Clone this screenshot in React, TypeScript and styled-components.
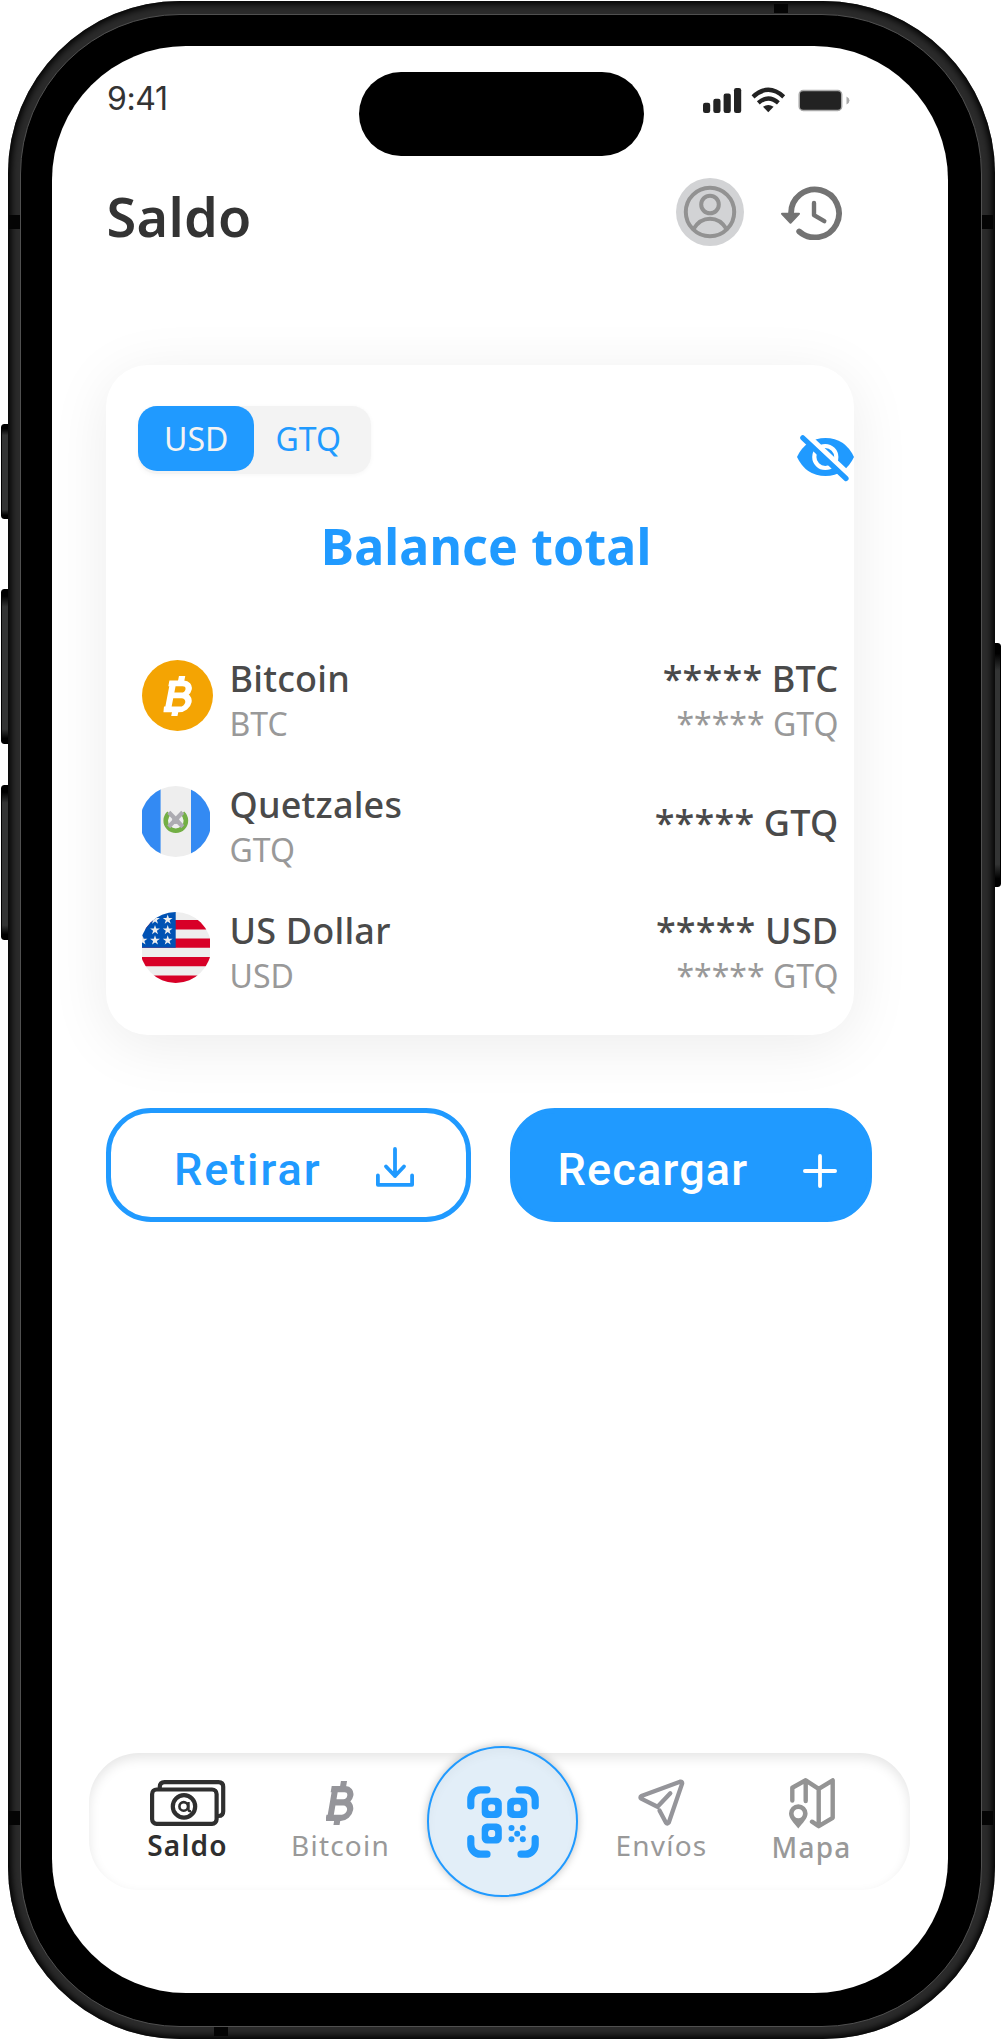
import React from "react";
import styled, { createGlobalStyle, css } from "styled-components";

const BLUE = "#209aff";
const SANS = '"Noto Sans", "Open Sans", sans-serif';

const GlobalStyle = createGlobalStyle`
  body { margin: 0; background: #fff; }
  * { box-sizing: border-box; }
  button { font: inherit; border: 0; background: none; padding: 0; cursor: pointer; }
  svg { display: block; flex: none; }
`;

/* ---------- device ---------- */

const Stage = styled.div`
  position: relative;
  width: 1002px;
  height: 2041px;
  padding: 1px 7.5px 2px;
  overflow: hidden;
`;

const Rim = styled.div`
  position: relative;
  height: 2038px;
  padding: 12.5px;
  border-radius: 172px;
  background: #2b2b2b;
  box-shadow: inset 0 0 7px 3px #000;
`;

const Bezel = styled.div`
  height: 100%;
  border: 1px solid #505050;
  border-radius: 160px;
  background: #000;
  padding: 31px 33px 33px 31px;
`;

const Screen = styled.main`
  display: flex;
  flex-direction: column;
  height: 100%;
  border-radius: 134px;
  background: #fff;
  overflow: hidden;
  font-family: ${SANS};
`;

const Key = styled.i<{ $side: "left" | "right"; $top: number; $length: number }>`
  position: absolute;
  ${(p) => p.$side}: 1px;
  top: ${(p) => p.$top}px;
  width: 8px;
  height: ${(p) => p.$length}px;
  border-radius: ${(p) => (p.$side === "left" ? "3px 0 0 3px" : "0 3px 3px 0")};
  background: linear-gradient(#000 4%, #333434 11%, #333434 91%, #000 97%);
  border: 1px solid #000;
`;

const Antenna = styled.i<{ $x: number; $y: number; $flat?: boolean }>`
  position: absolute;
  left: ${(p) => p.$x}px;
  top: ${(p) => p.$y}px;
  width: ${(p) => (p.$flat ? 14 : 11)}px;
  height: ${(p) => (p.$flat ? 9 : 14)}px;
  background: #040404;
`;

/* ---------- status bar ---------- */

const StatusBar = styled.div`
  display: flex;
  align-items: flex-start;
  margin-top: 26px;
  padding-left: 55px;
  height: 84px;
`;

const Time = styled.span`
  width: 251.5px;
  padding-top: 8px;
  font: 400 32px/38px Inter, sans-serif;
  letter-spacing: -0.4px;
  color: #333;
`;

const Island = styled.div`
  width: 285px;
  height: 84px;
  border-radius: 42px;
  background: #000;
`;

const StatusIcons = styled.div`
  display: flex;
  margin: 15px 0 0 59.5px;
`;

/* ---------- header ---------- */

const Header = styled.header`
  display: flex;
  align-items: center;
  height: 68px;
  margin-top: 22.5px;
  padding-left: 54.5px;
`;

const PageTitle = styled.h1`
  margin: 7px 0 0;
  width: 569.5px;
  font-size: 54px;
  line-height: 72px;
  font-weight: 600;
  letter-spacing: 0.3px;
  color: #333;
`;

const Avatar = styled.button`
  display: grid;
  place-items: center;
  width: 68px;
  height: 68px;
  margin-right: 36px;
  border-radius: 50%;
  background: #d2d3d5;
`;

/* ---------- balance card ---------- */

const Card = styled.section`
  width: 747.7px;
  height: 670.3px;
  margin: 118.7px 0 0 54.3px;
  padding-top: 41.6px;
  border-radius: 42px;
  background: #fff;
  box-shadow: 0 10px 60px rgba(0, 0, 0, 0.08);
`;

const CardTop = styled.div`
  display: flex;
  justify-content: space-between;
  align-items: flex-start;
  height: 76px;
  padding-left: 31.7px;
`;

const Toggle = styled.div`
  display: flex;
  align-items: flex-start;
  width: 233px;
  height: 68px;
  border-radius: 19px;
  background: #f3f3f3;
  box-shadow: 0 1px 5px rgba(0, 0, 0, 0.04);
`;

const ToggleOption = styled.button<{ $active?: boolean }>`
  width: 116.5px;
  height: 64.5px;
  border-radius: 19px;
  font-size: 32px;
  line-height: 62px;
  color: ${(p) => (p.$active ? "#f3f3f3" : BLUE)};
  background: ${(p) => (p.$active ? BLUE : "transparent")};
  ${(p) => !p.$active && css`padding-right: 9px;`}
`;

const HideButton = styled.button`
  margin-top: 29px;
`;

const BalanceTitle = styled.h2`
  margin: 29.6px 0 75.7px;
  padding-left: 12px;
  font-size: 50px;
  line-height: 68px;
  font-weight: 700;
  letter-spacing: 0.15px;
  text-align: center;
  color: ${BLUE};
`;

const Assets = styled.ul`
  display: grid;
  gap: 46px;
  margin: 0;
  padding: 0 15.6px 0 36.2px;
  list-style: none;
`;

const Asset = styled.li`
  display: flex;
  align-items: center;
  height: 80px;
`;

const AssetIcon = styled.div`
  width: 87px;
`;

const Lines = styled.div<{ $end?: boolean }>`
  display: flex;
  flex-direction: column;
  margin-top: 3px;
  ${(p) => p.$end && css`margin-left: auto; align-items: flex-end;`}
`;

const Primary = styled.span`
  font-size: 36px;
  line-height: 44px;
  font-weight: 500;
  letter-spacing: 0.2px;
  color: #4a4a4a;
`;

const Secondary = styled.span`
  margin: 5.3px 0 -5.3px;
  font-size: 32px;
  line-height: 36px;
  color: #999;
`;

/* ---------- actions ---------- */

const Actions = styled.div`
  display: flex;
  gap: 38.5px;
  margin: 73px 0 0 54px;
`;

const Action = styled.button<{ $filled?: boolean }>`
  display: flex;
  align-items: center;
  justify-content: space-between;
  width: ${(p) => (p.$filled ? 362.5 : 365)}px;
  height: 114.5px;
  padding: 9px ${(p) => (p.$filled ? "30.5px 0 43px" : "52.5px 0 63px")};
  border: 5px solid ${BLUE};
  border-radius: 45px;
  background: ${(p) => (p.$filled ? BLUE : "#fff")};
  color: ${(p) => (p.$filled ? "#fff" : BLUE)};
  font: 500 45px/60px Roboto, sans-serif;
  letter-spacing: ${(p) => (p.$filled ? 1.2 : 1.9)}px;

  svg { margin-top: ${(p) => (p.$filled ? 2 : -5)}px; }
`;

/* ---------- bottom navigation ---------- */

const Nav = styled.nav`
  display: grid;
  grid-template-columns: 150px 156px 168px 150px 150px;
  width: 820.5px;
  height: 137px;
  margin: auto 0 102.5px 37px;
  padding-left: 23.5px;
  border-radius: 50px;
  background: #fff;
  box-shadow: inset 0 5px 12px rgba(0, 0, 0, 0.1);
`;

const NavItem = styled.a<{ $weight?: number; $active?: boolean; $drop?: number }>`
  display: flex;
  flex-direction: column;
  align-items: center;
  padding-top: 25px;
  font-size: 28px;
  line-height: 36px;
  letter-spacing: 1.2px;
  font-weight: ${(p) => p.$weight ?? 400};
  color: ${(p) => (p.$active ? "#2f2f2f" : "#999")};
  span { margin-top: ${(p) => p.$drop ?? 0}px; }
`;

const NavIcon = styled.div`
  display: grid;
  place-items: center;
  height: 49px;
`;

const ScanButton = styled.button`
  display: grid;
  place-items: center;
  justify-self: center;
  width: 151px;
  height: 151px;
  margin-top: -7px;
  border: 2px solid ${BLUE};
  border-radius: 50%;
  background: #e2eef8;
  box-shadow: 0 0 8px rgba(0, 0, 0, 0.25), inset 0 5px 10px rgba(0, 0, 0, 0.03);
`;

/* ---------- icons ---------- */

const StatusGlyphs = () => (
  <svg width="148" height="28" viewBox="0 0 148 28">
    <g fill="#222">
      <rect x="0" y="15.8" width="7.2" height="10.2" rx="2.2" />
      <rect x="10.3" y="11.8" width="7.2" height="14.2" rx="2.2" />
      <rect x="20.6" y="6.5" width="7.2" height="19.5" rx="2.2" />
      <rect x="31" y="1" width="7.2" height="25" rx="2.2" />
      <path d="M65.3 25.3 60 19.8q5.3-3.8 10.6 0z" />
    </g>
    <g fill="none" stroke="#222" strokeWidth="4.3">
      <path d="M50 9.8Q65.3-4.200 80.700 9.800" />
      <path d="M55.3 15.8Q65.3 7 75.400 15.800" />
    </g>
    <rect x="96.2" y="3.5" width="42.5" height="20" rx="4" fill="#222" stroke="#aaa" strokeWidth="1.5" />
    <path d="M143.5 9.5q3 1.3 3 4t-3 4z" fill="#aaa" />
  </svg>
);

const UserIcon = () => (
  <svg width="54" height="54" viewBox="0 0 54 54" fill="none" stroke="#929292" strokeWidth="4">
    <circle cx="27" cy="27" r="24.2" />
    <circle cx="27" cy="19.5" r="8.8" />
    <path d="M10.500 44q6.200-10.300 16.500-10.300T43.500 44" />
  </svg>
);

const HistoryIcon = () => (
  <svg width="64" height="56" viewBox="0 0 64 56" fill="none" stroke="#737373" strokeLinecap="round" strokeLinejoin="round">
    <path d="M11 29.500A24 24 0 1 1 19.200 47.500" strokeWidth="5.800" />
    <path d="M2 29.800h17l-8.500 9z" fill="#737373" strokeWidth="2" />
    <path d="M34 19v12.200l10.300 6" strokeWidth="4.400" />
  </svg>
);

const EyeOffIcon = () => (
  <svg width="57" height="47" viewBox="0 0 57 47">
    <path d="M0 22Q9 3 28.500 3T57 22Q48 41 28.500 41T0 22z" fill={BLUE} />
    <circle cx="28.3" cy="22" r="11" fill="none" stroke="#fff" strokeWidth="4.2" />
    <path d="M8.500-1.200 55 42.500" stroke="#fff" strokeWidth="5.5" />
    <path d="M5.800 2.800 49 43.500" stroke={BLUE} strokeWidth="5.2" strokeLinecap="round" />
  </svg>
);

const BitcoinMark = ({ color, width, height, x = 0, y = 0 }: { color: string; width: number; height: number; x?: number; y?: number }) => (
  <svg x={x} y={y} width={width} height={height} viewBox="0 0 31 44" preserveAspectRatio="none">
    <g transform="translate(7.6 0) skewX(-10)" fill="none" stroke={color} strokeWidth="6.3">
      <path d="M-.8 8.200H13.500a6.600 6.600 0 0 1 0 13.200H5M13.500 21.400h1.200a7.700 7.700 0 0 1 0 15.400H-1.200M3.300 8.200v28.600" />
      <path d="M11 0v7M11 37v7" />
    </g>
  </svg>
);

const BitcoinCoin = () => (
  <svg width="71" height="71" viewBox="0 0 71 71">
    <circle cx="35.5" cy="35.5" r="35.5" fill="#f4a403" />
    <BitcoinMark color="#fff" x={21.5} y={16} width={31} height={40} />
  </svg>
);

const GuatemalaFlag = () => (
  <svg width="67.5" height="71" viewBox="0 0 67.5 71">
    <clipPath id="gt"><circle cx="33.7" cy="35.5" r="35.5" /></clipPath>
    <g clipPath="url(#gt)">
      <path fill="#eee" d="M0 0h68v71H0z" />
      <path fill="#338af3" d="M0 0h18.600v71H0zM49 0h19v71H49z" />
      <path d="M27 27.200a10.100 10.100 0 1 0 13.600 0" fill="none" stroke="#73af45" strokeWidth="4.6" />
      <path d="m26.800 26.300 14 14.500M40.700 26.300l-14 14.500" stroke="#acabb1" strokeWidth="4.2" />
      <circle cx="33.7" cy="34.5" r="3.6" fill="#acabb1" />
    </g>
  </svg>
);

const STARS = [[25.7, 7.5], [13, 7.5], [13, 18], [25.7, 18], [0.5, 28.3], [13, 28.3], [25.7, 28.3]];

const UsaFlag = () => (
  <svg width="67.5" height="71" viewBox="0 0 67.5 71">
    <clipPath id="us"><circle cx="33.7" cy="35.5" r="35.5" /></clipPath>
    <g clipPath="url(#us)">
      <path fill="#eee" d="M0 0h68v71H0z" />
      <path fill="#d80027" d="M0 8h68v9.500H0zM0 26.500h68v9.200H0zM0 45h68v9.200H0zM0 63.500h68V71H0z" />
      <path fill="#0052b4" d="M0 0h33.700v35.700H0z" />
      {STARS.map(([x, y]) => (
        <path key={`${x}-${y}`} fill="#eee" transform={`translate(${x} ${y})`}
          d="M0-5 1.200-1.500h3.700L1.900.7 3 4.200 0 2.100-3 4.200-1.900.7-4.900-1.500h3.700z" />
      ))}
    </g>
  </svg>
);

const DownloadIcon = () => (
  <svg width="38" height="40" viewBox="0 0 38 40" fill="none" stroke={BLUE} strokeWidth="3.8" strokeLinecap="round" strokeLinejoin="round">
    <path d="M19 2v27M10 19.500l9 9.500 9-9.500M1.900 28.500v9.300h34.200v-9.300" />
  </svg>
);

const PlusIcon = () => (
  <svg width="34" height="34" viewBox="0 0 34 34" stroke="#fff" strokeWidth="3.8" strokeLinecap="round">
    <path d="M17 1.900v30.200M1.900 17h30.200" />
  </svg>
);

const CashIcon = () => (
  <svg width="76" height="46" viewBox="0 0 76 46" fill="none" stroke="#2f2f2f" strokeWidth="4.2">
    <rect x="2.1" y="9.5" width="64.5" height="34.3" rx="4.5" />
    <path d="M9.800 8.500V6.800q0-4.700 4.700-4.700h54q4.700 0 4.700 4.700v24.500q0 4.700-4.700 4.700h-1.200" />
    <circle cx="34" cy="26.4" r="11.2" />
    <circle cx="33.7" cy="26.4" r="4.3" strokeWidth="2.6" />
    <path d="M38.500 22v7.500q0 2.200 2.600 1.700" strokeWidth="2.4" />
  </svg>
);

const SendIcon = () => (
  <svg width="47" height="47" viewBox="0 0 47 47" fill="none" stroke="#95959a" strokeWidth="4.3" strokeLinecap="round" strokeLinejoin="round">
    <path d="M32.300 14.300 19.500 27.700 3.200 19.600q-1.600-1.300.2-2.500L42 2.700q2.400-.5 2.200 1.700L30.800 43.500q-1.500 2-2.800.2l-6.500-12.200" />
  </svg>
);

const MapIcon = () => (
  <svg width="46" height="51" viewBox="0 0 46 51" fill="none" stroke="#949494" strokeWidth="4.4" strokeLinecap="round" strokeLinejoin="round">
    <path d="M3.300 22.500V9.700L16.700 2.300l13 8.500 14-8.500v37.500l-14 8.400-6.700-4.500M16.700 3v20M29.700 11v37" />
    <path d="M9.300 26.300a9.300 9.300 0 0 1 9.300 9.300c0 5-5 9.500-9.300 15-4.300-5.500-9.300-10-9.300-15a9.300 9.300 0 0 1 9.300-9.300zm0 4.600a4.700 4.700 0 1 0 0 9.400 4.700 4.700 0 0 0 0-9.400z" fill="#949494" stroke="none" />
  </svg>
);

const ScanIcon = () => (
  <svg width="72" height="72" viewBox="0 0 72 72" fill="none" stroke={BLUE} strokeWidth="7.2" strokeLinecap="round">
    <path d="M3.800 20v-6.500a9.700 9.700 0 0 1 9.700-9.700H20M52.200 3.800h6.300a9.700 9.700 0 0 1 9.700 9.700V20M3.800 52.500v6a9.700 9.700 0 0 0 9.700 9.700H20M54 68.200h4.500a9.700 9.700 0 0 0 9.700-9.700v-6" />
    <g strokeWidth="6.4">
      <rect x="17.9" y="15" width="13.7" height="13.7" rx="2.2" />
      <rect x="43.4" y="15" width="13.7" height="13.7" rx="2.2" />
      <rect x="17.9" y="40.7" width="13.7" height="13.7" rx="2.2" />
    </g>
    <g strokeWidth="3">
      <circle cx="24.7" cy="21.8" r="5.3" />
      <circle cx="50.2" cy="21.8" r="5.3" />
      <circle cx="24.7" cy="47.5" r="5.3" />
    </g>
    <g stroke="none" fill={BLUE}>
      {[[44.5, 41.9], [55.8, 41.9], [50.2, 47.7], [44.5, 53.3], [55.8, 53.3]].map(([x, y]) => (
        <circle key={`${x}-${y}`} cx={x} cy={y} r="3" />
      ))}
    </g>
  </svg>
);

/* ---------- screen ---------- */

const ASSETS = [
  { name: "Bitcoin", code: "BTC", amount: "***** BTC", local: "***** GTQ", icon: <BitcoinCoin /> },
  { name: "Quetzales", code: "GTQ", amount: "***** GTQ", local: null, icon: <GuatemalaFlag /> },
  { name: "US Dollar", code: "USD", amount: "***** USD", local: "***** GTQ", icon: <UsaFlag /> },
];

export default function App() {
  return (
    <Stage>
      <GlobalStyle />
      <Key $side="left" $top={424} $length={95} />
      <Key $side="left" $top={589} $length={155} />
      <Key $side="left" $top={785} $length={155} />
      <Key $side="right" $top={643} $length={244} />
      <Rim>
        <Antenna $x={1} $y={214} />
        <Antenna $x={974.5} $y={214} />
        <Antenna $x={1} $y={1810} />
        <Antenna $x={974.5} $y={1810} />
        <Antenna $x={766.5} $y={3} $flat />
        <Antenna $x={206} $y={2026} $flat />
        <Bezel>
          <Screen>
            <StatusBar>
              <Time>9:41</Time>
              <Island />
              <StatusIcons><StatusGlyphs /></StatusIcons>
            </StatusBar>

            <Header>
              <PageTitle>Saldo</PageTitle>
              <Avatar aria-label="Perfil"><UserIcon /></Avatar>
              <button aria-label="Historial"><HistoryIcon /></button>
            </Header>

            <Card>
              <CardTop>
                <Toggle>
                  <ToggleOption $active>USD</ToggleOption>
                  <ToggleOption>GTQ</ToggleOption>
                </Toggle>
                <HideButton aria-label="Mostrar saldo"><EyeOffIcon /></HideButton>
              </CardTop>
              <BalanceTitle>Balance total</BalanceTitle>
              <Assets>
                {ASSETS.map((a) => (
                  <Asset key={a.code}>
                    <AssetIcon>{a.icon}</AssetIcon>
                    <Lines>
                      <Primary>{a.name}</Primary>
                      <Secondary>{a.code}</Secondary>
                    </Lines>
                    <Lines $end>
                      <Primary>{a.amount}</Primary>
                      {a.local && <Secondary>{a.local}</Secondary>}
                    </Lines>
                  </Asset>
                ))}
              </Assets>
            </Card>

            <Actions>
              <Action>Retirar<DownloadIcon /></Action>
              <Action $filled>Recargar<PlusIcon /></Action>
            </Actions>

            <Nav>
              <NavItem $active $weight={600}><NavIcon><CashIcon /></NavIcon><span>Saldo</span></NavItem>
              <NavItem><NavIcon><BitcoinMark color="#95959a" width={30} height={44} /></NavIcon><span>Bitcoin</span></NavItem>
              <ScanButton aria-label="Escanear"><ScanIcon /></ScanButton>
              <NavItem><NavIcon><SendIcon /></NavIcon><span>Envíos</span></NavItem>
              <NavItem $weight={500} $drop={2}><NavIcon><MapIcon /></NavIcon><span>Mapa</span></NavItem>
            </Nav>
          </Screen>
        </Bezel>
      </Rim>
    </Stage>
  );
}
